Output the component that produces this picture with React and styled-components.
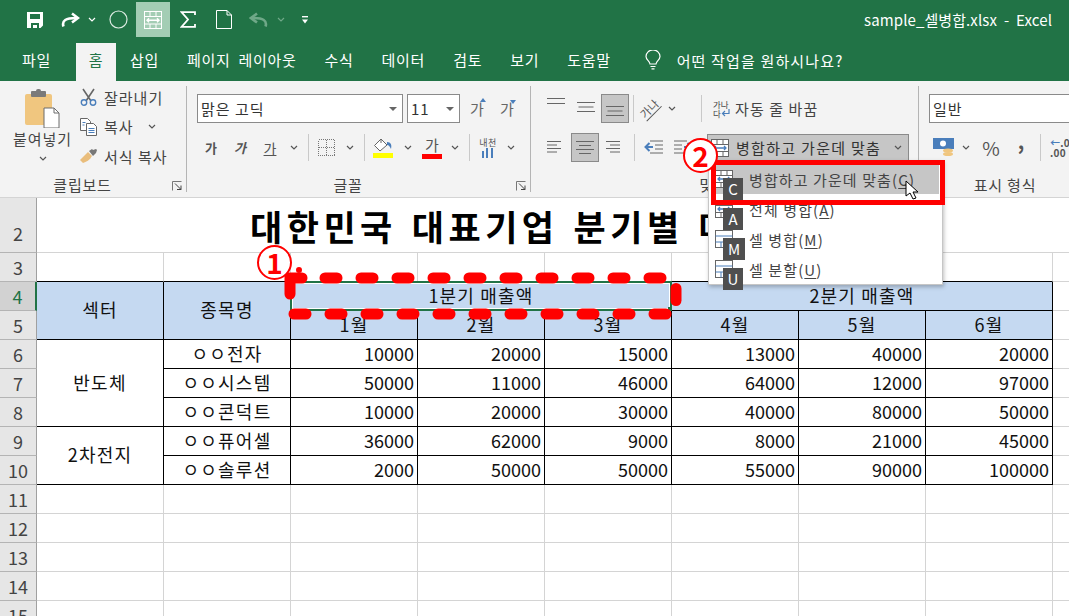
import styled, { createGlobalStyle } from 'styled-components'

const FONT = `"Noto Sans CJK KR", "Noto Sans", sans-serif`
const GREEN = '#217346'
const BLUE = '#4a7ebb'
const INK = '#444'

const GlobalStyle = createGlobalStyle`
    html, body {
        margin: 0;
        height: 100%;
        overflow: hidden;
        background: #fff;
        font-family: ${FONT};
    }
    * { box-sizing: border-box; }
`

const Page = styled.div`
    position: relative;
    width: 1069px;
    height: 616px;
    overflow: hidden;
`

/* title bar */
const TitleBar = styled.div`
    height: 43px;
    background: ${GREEN};
    display: flex;
    align-items: flex-start;
    padding-left: 27px;
    color: #fff;
`
const Qat = styled.div`
    width: ${(p) => p.$w}px;
    height: 35px;
    margin-top: 2px;
    padding-left: ${(p) => p.$pad || 0}px;
    display: flex;
    align-items: center;
    justify-content: center;
    background: ${(p) => (p.$active ? '#a3cdb4' : 'transparent')};
`
const DocTitle = styled.div`
    margin-left: auto;
    margin-right: 17px;
    margin-top: 10px;
    font-size: 15px;
    line-height: 20px;
    letter-spacing: 0.1px;
    white-space: pre;
`

/* tabs */
const TabBar = styled.div`
    height: 38px;
    background: ${GREEN};
    display: flex;
    padding-left: 8px;
    color: #fff;
`
const Tab = styled.div`
    padding: 0 14px;
    font-size: 15px;
    letter-spacing: 0.7px;
    word-spacing: 4px;
    line-height: 34px;
    white-space: nowrap;
    ${(p) => p.$gap && `margin-right: ${p.$gap}px;`}
    ${(p) => p.$active && `
        background: #f3f3f3;
        color: ${GREEN};
        width: 40px;
        padding: 0;
        text-align: center;
    `}
`
const Tell = styled.div`
    display: flex;
    align-items: center;
    margin-left: 20px;
    height: 34px;
    gap: 16px;
    font-size: 15px;
    letter-spacing: 1.15px;
`

/* ribbon */
const Ribbon = styled.div`
    height: 117px;
    background: #f3f3f3;
    border-bottom: 1px solid #d4d4d4;
    display: flex;
    color: ${INK};
`
const Group = styled.div`
    position: relative;
    flex: none;
    width: ${(p) => p.$w}px;
    height: 106px;
    margin-top: 5px;
    border-right: ${(p) => (p.$last ? 'none' : '1px solid #b4b4b4')};
    display: flex;
    flex-direction: column;
`
const GroupBody = styled.div`
    flex: 1;
    min-height: 0;
`
const GroupLabel = styled.div`
    height: 20px;
    margin-bottom: -3px;
    text-align: center;
    font-size: 15px;
    letter-spacing: 0.8px;
    line-height: 20px;
    padding-right: ${(p) => (p.$plain ? 0 : 21)}px;
`
const Launcher = styled.svg`
    position: absolute;
    right: 3px;
    bottom: 1px;
    width: 11px;
    height: 10px;
`
const Row = styled.div`
    display: flex;
    align-items: center;
    height: ${(p) => p.$h || 29}px;
    margin-top: ${(p) => p.$top || 0}px;
    padding-left: ${(p) => p.$left || 0}px;
    gap: ${(p) => p.$gap || 0}px;
`
const Slot = styled.div`
    flex: none;
    width: ${(p) => p.$w}px;
    height: ${(p) => p.$h || 29}px;
    display: flex;
    align-items: center;
    justify-content: center;
    ${(p) => p.$on && 'background: #c6c6c6; border: 1px solid #8a8a8a;'}
`
const Sep = styled.div`
    flex: none;
    width: 1px;
    height: 27px;
    background: #c9c9c9;
    margin-left: ${(p) => p.$m}px;
`
const Combo = styled.div`
    flex: none;
    width: ${(p) => p.$w}px;
    height: 29px;
    background: #fff;
    border: 1px solid #8a8a8a;
    display: flex;
    align-items: center;
    justify-content: space-between;
    padding: 0 5px 0 3px;
    font-size: 15px;
    letter-spacing: 1px;
    color: #333;
`
const ComboArrow = styled.span`
    width: 0;
    height: 0;
    border-left: 4px solid transparent;
    border-right: 4px solid transparent;
    border-top: 4px solid #666;
`

/* clipboard */
const ClipBody = styled(GroupBody)`
    display: flex;
`
const PasteButton = styled.div`
    width: 78px;
    padding: 3px 0 0 7px;
    display: flex;
    flex-direction: column;
    align-items: center;
    font-size: 15px;
    letter-spacing: 0.9px;
`
const PasteLabel = styled.div`
    line-height: 20px;
    margin-top: 1px;
    margin-bottom: 7px;
    white-space: nowrap;
`
const SmallStack = styled.div`
    display: flex;
    flex-direction: column;
    gap: 7.5px;
`
const SmallButton = styled.div`
    height: 22px;
    display: flex;
    align-items: center;
    font-size: 15px;
    letter-spacing: 1px;
    white-space: nowrap;
`
const SmallIcon = styled.div`
    width: 26px;
    padding-left: 2px;
    display: flex;
`

/* font */
const Ga = styled.span`
    font-size: ${(p) => p.$size || 14}px;
    font-weight: ${(p) => (p.$bold ? 700 : 400)};
    font-style: ${(p) => (p.$italic ? 'italic' : 'normal')};
    text-decoration: ${(p) => (p.$under ? 'underline' : 'none')};
    color: ${(p) => p.$color || '#555'};
    line-height: 18px;
`
const Grow = styled.div`
    position: relative;
    width: 26px;
    display: flex;
    justify-content: center;
    font-size: 15px;
    color: #666;
`
const GrowMark = styled.span`
    position: absolute;
    top: ${(p) => (p.$down ? 0 : -2)}px;
    right: 4px;
    width: 0;
    height: 0;
    border-left: 3px solid transparent;
    border-right: 3px solid transparent;
    ${(p) => (p.$down ? `border-top: 4px solid ${BLUE};` : `border-bottom: 4px solid ${BLUE};`)}
`
const Swatch = styled.div`
    display: flex;
    flex-direction: column;
    align-items: center;
    width: 20px;
`
const SwatchBar = styled.div`
    width: 20px;
    height: 5px;
    background: ${(p) => p.$c};
`
const Phonetic = styled.div`
    display: flex;
    flex-direction: column;
    align-items: center;
    font-size: 9px;
    line-height: 11px;
    letter-spacing: 0.4px;
    color: #555;
`

/* alignment */
const Orient = styled.div`
    position: relative;
    font-size: 11px;
    line-height: 13px;
    transform: rotate(-45deg);
    color: #555;
    letter-spacing: 0.5px;
    white-space: nowrap;
    border-bottom: 1px solid #555;
`
const WrapButton = styled.div`
    display: flex;
    align-items: center;
    padding-left: 11px;
    gap: 4px;
    font-size: 15px;
    letter-spacing: 1.1px;
    white-space: nowrap;
`
const WrapGlyph = styled.div`
    width: 18px;
    display: flex;
    flex-direction: column;
    font-size: 8.5px;
    line-height: 8.5px;
    letter-spacing: 0;
    color: #444;
`
const WrapLine = styled.div`
    display: flex;
    align-items: center;
    white-space: nowrap;
`
const MergeButton = styled.div`
    flex: none;
    width: 202px;
    height: 28px;
    margin-left: 12px;
    background: #c6c6c6;
    border: 1px solid #8a8a8a;
    display: flex;
    align-items: center;
    padding: 0 6px 0 3px;
    gap: 7px;
    font-size: 15px;
    letter-spacing: 1.3px;
    color: #333;
    white-space: nowrap;
`
const MergeChevron = styled.span`
    margin-left: auto;
    display: flex;
`

/* number */
const Symbol = styled.span`
    font-size: ${(p) => p.$size}px;
    color: #555;
    font-weight: ${(p) => p.$weight || 400};
    margin-top: ${(p) => p.$lift || 0}px;
`
const DecimalGlyph = styled.div`
    font-size: 10px;
    line-height: 10px;
    font-weight: 700;
    color: #555;
    letter-spacing: 0.3px;
    white-space: nowrap;
`
const DecimalArrow = styled.span`
    color: ${BLUE};
`

/* sheet */
const Sheet = styled.div`
    display: grid;
    grid-template-columns: 37px repeat(8, 127px) 17px;
    grid-template-rows: 55px repeat(13, 29px);
    font-size: 18px;
    letter-spacing: 1.2px;
    color: #111;
`
const RowHead = styled.div`
    background: ${(p) => (p.$sel ? '#d2d2d2' : '#e6e6e6')};
    color: ${(p) => (p.$sel ? GREEN : '#444')};
    border-right: ${(p) => (p.$sel ? `2px solid ${GREEN}` : '1px solid #a0a0a0')};
    border-bottom: 1px solid #b4b4b4;
    display: flex;
    align-items: flex-end;
    justify-content: center;
    line-height: 27px;
    letter-spacing: 0;
    padding-bottom: ${(p) => p.$lift || 0}px;
`
const Cell = styled.div`
    position: relative;
    grid-column: span ${(p) => p.$span || 1};
    grid-row: span ${(p) => p.$rows || 1};
    background: ${(p) => (p.$head ? '#c5d9f1' : '#fff')};
    border-right: ${(p) => (p.$noRight ? 'none' : `1px solid ${p.$rightDark ? '#000' : '#d4d4d4'}`)};
    border-bottom: 1px solid ${(p) => (p.$bottomDark ? '#000' : '#d4d4d4')};
    display: flex;
    align-items: center;
    justify-content: ${(p) => (p.$num ? 'flex-end' : 'center')};
    padding-right: ${(p) => (p.$num ? 3 : 0)}px;
    padding-bottom: 2px;
    line-height: 27px;
    white-space: nowrap;
    ${(p) => p.$num && 'letter-spacing: 0;'}
`
const Title = styled(Cell)`
    font-size: 35px;
    font-weight: 700;
    letter-spacing: 4.5px;
    word-spacing: 2.5px;
    color: #000;
    justify-content: flex-start;
    padding-left: 213px;
    padding-bottom: 0;
    overflow: hidden;
`
const Selection = styled.div`
    position: absolute;
    left: -1px;
    top: -1px;
    right: -1px;
    bottom: -1px;
    border: 2px solid ${GREEN};
    box-shadow: inset 0 0 0 1px #fff;
    &::after {
        content: '';
        position: absolute;
        right: -3px;
        bottom: -3px;
        width: 5px;
        height: 5px;
        background: ${GREEN};
    }
`

/* annotations on top of the sheet */
const Dashes = styled.svg`
    position: absolute;
    left: 0;
    top: 0;
    pointer-events: none;
`
const Badge = styled.div`
    position: absolute;
    left: ${(p) => p.$x - 17}px;
    top: ${(p) => p.$y - 17}px;
    width: 35px;
    height: 35px;
    border-radius: 50%;
    background: #fff;
    border: 2px solid #f00;
    color: #f00;
    font-size: 28px;
    font-weight: 700;
    line-height: 30px;
    text-align: center;
`
const Menu = styled.div`
    position: absolute;
    left: 708px;
    top: 160px;
    width: 235px;
    height: 125px;
    background: #fff;
    border: 1px solid #c6c6c6;
    box-shadow: 1px 2px 4px rgba(0, 0, 0, 0.25);
    padding-top: 3px;
`
const MenuItem = styled.div`
    height: 30px;
    display: flex;
    align-items: center;
    margin: 0 3px;
    padding-left: 3px;
    gap: 16px;
    font-size: 15px;
    letter-spacing: 1.1px;
    color: #444;
    background: ${(p) => (p.$on ? '#c6c6c6' : 'transparent')};
    white-space: nowrap;
    & u { text-underline-offset: 2px; }
`
const KeyTip = styled.div`
    position: absolute;
    left: 723px;
    top: ${(p) => p.$top}px;
    width: ${(p) => p.$w || 20}px;
    height: 22px;
    background: #4f4f4f;
    color: #fff;
    font-size: 15px;
    line-height: 22px;
    text-align: center;
`
const RedBox = styled.div`
    position: absolute;
    left: 711px;
    top: 160px;
    width: 234px;
    height: 45px;
    border: 5px solid #f00;
    pointer-events: none;
`
const Cursor = styled.svg`
    position: absolute;
    left: 905px;
    top: 180px;
`

/* icons */
const Chevron = ({ c = '#555' }) => (
    <svg width="8" height="5" viewBox="0 0 8 5" fill="none" stroke={c} strokeWidth="1.2">
        <path d="M1 1l3 3 3-3" />
    </svg>
)

const Save = () => (
    <svg width="16" height="16" viewBox="0 0 16 16">
        <path fill="#fff" fillRule="evenodd" d="M0 0h16v13.500L13.500 16H0zM3 2v5h10V2zM4 11v5h2v-3h4v3h2v-5z" />
    </svg>
)
const Curl = ({ c = '#fff', flip }) => (
    <svg width="19" height="15" viewBox="0 0 19 15" fill="none" stroke={c} strokeWidth="2.6" style={flip ? { transform: 'scaleX(-1)' } : undefined}>
        <path d="M2.500 14.500C0.500 8.500 5 6 15 6" />
        <path d="M11 1.500L17 6l-6 4.500" />
    </svg>
)
const Ring = () => (
    <svg width="19" height="19" viewBox="0 0 19 19" fill="none" stroke="#dcebe2" strokeWidth="1.2">
        <circle cx="9.500" cy="9.500" r="8.500" />
    </svg>
)
const QatMerge = () => (
    <svg width="20" height="20" viewBox="0 0 20 20" fill="none" stroke="#fff" strokeWidth="1">
        <rect x="1.500" y="1.500" width="17" height="17" />
        <path d="M1.500 6.500h17M1.500 14h17M7 1.500v5M13 1.500v5M7 14v4.500M13 14v4.500" />
        <path d="M4 10.200h12M6 8.200l-2 2 2 2M14 8.200l2 2-2 2" strokeWidth="1.400" />
    </svg>
)
const Sigma = () => (
    <svg width="16" height="17" viewBox="0 0 16 17" fill="none" stroke="#fff" strokeWidth="1.800">
        <path d="M15 4V1.200H1.500L8 8.500 1.500 15.800H15V13" />
    </svg>
)
const Page2 = () => (
    <svg width="16" height="19" viewBox="0 0 16 19" fill="none" stroke="#fff" strokeWidth="1">
        <path d="M1 .5h10l4.500 4.500v13.500H.5V.5zM11 .5V5h4.500" />
    </svg>
)
const QatMore = () => (
    <svg width="7" height="8" viewBox="0 0 7 8" fill="#fff">
        <rect y="0" width="6" height="1.400" />
        <path d="M0 3.500h6L3 7.500z" />
    </svg>
)
const Bulb = () => (
    <svg width="16" height="20" viewBox="0 0 16 20" fill="none" stroke="#fff" strokeWidth="1.200">
        <path d="M5 14c0-3-4-4-4-7.500a7 6.500 0 0 1 14 0C15 10 11 11 11 14z" />
        <path d="M5.500 16.500h5M6.500 18.800h3" />
    </svg>
)
const PasteIcon = () => (
    <svg width="35" height="39" viewBox="0 0 35 39">
        <rect x="0" y="5" width="27" height="31" rx="2" fill="#f0c67f" />
        <rect x="6" y="2" width="15" height="6" rx="1" fill="#7a7a7a" />
        <rect x="11" y="0" width="5" height="4" rx="2" fill="#7a7a7a" />
        <path d="M19 19h10l5 5v15H19z" fill="#fff" stroke="#6d6d6d" />
        <path d="M29 19v5h5" fill="none" stroke="#6d6d6d" />
    </svg>
)
const Scissors = () => (
    <svg width="17" height="18" viewBox="0 0 17 18" fill="none">
        <path d="M3 1l8 12M14 1L6 13" stroke="#666" strokeWidth="1.600" />
        <circle cx="4" cy="14.500" r="2.700" stroke={BLUE} strokeWidth="1.400" />
        <circle cx="13" cy="14.500" r="2.700" stroke={BLUE} strokeWidth="1.400" />
    </svg>
)
const CopyIcon = () => (
    <svg width="17" height="18" viewBox="0 0 17 18" fill="#fff" stroke="#666">
        <path d="M.5.500h7l3 3v9H.5z" />
        <path d="M6.500 5.500h7l3 3v9h-10z" />
        <path d="M8.500 10.500h6M8.500 12.500h6M8.500 14.500h6M2.500 4.500h3M2.500 7h2" stroke={BLUE} />
    </svg>
)
const Brush = () => (
    <svg width="18" height="16" viewBox="0 0 18 16">
        <path d="M0 12l8-8 4 4c-2 4-6 6-9 7z" fill="#e9bd7c" />
        <path d="M9 3l3-2 1 1 3-1 1 1-1 3-2 2-1 1z" fill="#777" />
    </svg>
)
const Launch = () => (
    <Launcher viewBox="0 0 11 10" fill="none" stroke="#777">
        <path d="M.5 9.500V.5h9" />
        <path d="M3 2.500l6 6M5 8.500h4v-4" stroke="#444" />
    </Launcher>
)
const BorderIcon = () => (
    <svg width="17" height="17" viewBox="0 0 17 17" fill="none" stroke="#777" strokeDasharray="1 1" shapeRendering="crispEdges">
        <rect x=".5" y=".5" width="16" height="16" />
        <path d="M8.500.5v16M.5 8.500h16" />
    </svg>
)
const FillIcon = () => (
    <svg width="20" height="15" viewBox="0 0 20 15" fill="none">
        <path d="M8 1L1.500 7.500 7 13l7-6z" stroke="#666" fill="#fff" />
        <path d="M8 1V5" stroke="#666" />
        <path d="M14 4c4 0 5 3 4 7-1-2-2-4-4-4z" fill={BLUE} />
    </svg>
)
const PhoneticBars = () => (
    <svg width="14" height="10" viewBox="0 0 14 10" fill={BLUE}>
        <rect x="1" y="3" width="2" height="7" />
        <rect x="5" y="0" width="2" height="10" />
        <rect x="10" y="0" width="2" height="10" />
    </svg>
)
const ReturnArrow = () => (
    <svg width="9" height="8" viewBox="0 0 9 8" fill="none" stroke={BLUE} strokeWidth="1.200">
        <path d="M8 0v4.500H1.500M4 2L1.500 4.500 4 7" />
    </svg>
)

const LINES = {
    top: [[0, 0, 18], [0, 5, 18]],
    middle: [[0, 0, 18], [1.500, 4.500, 15], [0, 9, 18]],
    bottom: [[0, 0, 18], [1.500, 4.500, 15], [0, 9, 18]],
    left: [[0, 0, 14], [0, 3.500, 10], [0, 7, 14], [0, 10.500, 10]],
    center: [[0, 0, 18], [3, 4, 12], [0, 8, 18], [3, 12, 12]],
    right: [[0, 0, 14], [4, 3.500, 10], [0, 7, 14], [4, 10.500, 10]],
}
const AlignIcon = ({ kind, down = 0 }) => (
    <svg width="18" height="14" viewBox="0 0 18 14" stroke="#666" style={{ marginTop: down }}>
        {LINES[kind].map(([x, y, w]) => (
            <line key={y} x1={x} x2={x + w} y1={y + 0.5} y2={y + 0.5} />
        ))}
    </svg>
)
const IndentIcon = ({ flip }) => (
    <svg width="19" height="16" viewBox="0 0 19 16" fill="none" style={flip ? { transform: 'scaleX(-1)' } : undefined}>
        <path d="M6 1h13M11 5h8M11 9h8M6 13h13" stroke="#666" />
        <path d="M9 7H2M5.500 3L1.500 7l4 4" stroke={BLUE} strokeWidth="2" />
    </svg>
)
const MergeGlyph = ({ kind = 'center' }) => (
    <svg width="18" height="18" viewBox="0 0 18 18" fill="#fff" stroke="#666">
        <rect x=".5" y=".5" width="17" height="17" />
        {kind !== 'split' && <path d="M.5 5.500h17M6 .5v5M12 .5v5M.5 12.500h17M6 12.500v5M12 12.500v5" fill="none" />}
        {kind === 'split' && <path d="M.5 6h17M.5 12h17M6 12v5.500M12 12v5.500" fill="none" stroke={BLUE} />}
        {kind !== 'split' && <path d="M3 9h12M5 7L3 9l2 2M13 7l2 2-2 2" fill="none" stroke={BLUE} strokeWidth="1.300" />}
    </svg>
)
const MoneyIcon = () => (
    <svg width="21" height="19" viewBox="0 0 21 19">
        <rect x="0" y="0" width="21" height="11" fill={BLUE} />
        <circle cx="10" cy="5.500" r="3" fill="#fff" />
        <ellipse cx="15" cy="12.500" rx="5" ry="2" fill="#f0c67f" />
        <ellipse cx="15" cy="16" rx="5" ry="2" fill="#f0c67f" />
    </svg>
)

const ROWS = [
    ['반도체', 3, 'ㅇㅇ전자', [10000, 20000, 15000, 13000, 40000, 20000]],
    [null, 0, 'ㅇㅇ시스템', [50000, 11000, 46000, 64000, 12000, 97000]],
    [null, 0, 'ㅇㅇ콘덕트', [10000, 20000, 30000, 40000, 80000, 50000]],
    ['2차전지', 2, 'ㅇㅇ퓨어셀', [36000, 62000, 9000, 8000, 21000, 45000]],
    [null, 0, 'ㅇㅇ솔루션', [2000, 50000, 50000, 55000, 90000, 100000]],
]
const MONTHS = ['1월', '2월', '3월', '4월', '5월', '6월']
const TOP_DASHES = Array.from({ length: 10 }, (_, i) => 325 + i * 36)
const BOTTOM_DASHES = Array.from({ length: 11 }, (_, i) => 294 + i * 36)

const Line = ({ no, sector, span, name, values }) => (
    <>
        <RowHead>{no}</RowHead>
        {sector && <Cell $rows={span} $rightDark $bottomDark>{sector}</Cell>}
        <Cell $rightDark $bottomDark>{name}</Cell>
        {values.map((v, i) => <Cell key={i} $num $rightDark $bottomDark>{v}</Cell>)}
        <Cell $noRight />
    </>
)

const BlankLine = ({ no }) => (
    <>
        <RowHead>{no}</RowHead>
        {Array.from({ length: 8 }, (_, i) => <Cell key={i} />)}
        <Cell $noRight />
    </>
)

const App = () => {
    return (
        <Page>
            <GlobalStyle />
            <TitleBar>
                <Qat $w={16}><Save /></Qat>
                <Qat $w={44} $pad={10}><Curl /></Qat>
                <Qat $w={10}><Chevron c="#fff" /></Qat>
                <Qat $w={39} $pad={3}><Ring /></Qat>
                <Qat $w={34} $active><QatMerge /></Qat>
                <Qat $w={36}><Sigma /></Qat>
                <Qat $w={36}><Page2 /></Qat>
                <Qat $w={32}><Curl c="#6fa888" flip /></Qat>
                <Qat $w={13}><Chevron c="#6fa888" /></Qat>
                <Qat $w={36}><QatMore /></Qat>
                <DocTitle>sample_셀병합.xlsx  -  Excel</DocTitle>
            </TitleBar>
            <TabBar>
                <Tab $gap={11}>파일</Tab>
                <Tab $active>홈</Tab>
                <Tab>삽입</Tab>
                <Tab>페이지 레이아웃</Tab>
                <Tab>수식</Tab>
                <Tab>데이터</Tab>
                <Tab>검토</Tab>
                <Tab>보기</Tab>
                <Tab>도움말</Tab>
                <Tell><Bulb />어떤 작업을 원하시나요?</Tell>
            </TabBar>
            <Ribbon>
                <Group $w={187}>
                    <ClipBody>
                        <PasteButton>
                            <PasteIcon />
                            <PasteLabel>붙여넣기</PasteLabel>
                            <Chevron />
                        </PasteButton>
                        <SmallStack>
                            <SmallButton><SmallIcon><Scissors /></SmallIcon>잘라내기</SmallButton>
                            <SmallButton>
                                <SmallIcon><CopyIcon /></SmallIcon>복사
                                <Slot $w={36} $h={22}><Chevron /></Slot>
                            </SmallButton>
                            <SmallButton><SmallIcon><Brush /></SmallIcon>서식 복사</SmallButton>
                        </SmallStack>
                    </ClipBody>
                    <GroupLabel>클립보드</GroupLabel>
                    <Launch />
                </Group>
                <Group $w={344}>
                    <GroupBody>
                        <Row $top={8} $left={10} $gap={4}>
                            <Combo $w={206}>맑은 고딕<ComboArrow /></Combo>
                            <Combo $w={53}>11<ComboArrow /></Combo>
                            <Grow><Ga $size={15} $color="#666">가</Ga><GrowMark /></Grow>
                            <Grow><Ga $size={15} $color="#666">가</Ga><GrowMark $down /></Grow>
                        </Row>
                        <Row $top={10} $left={10}>
                            <Slot $w={28}><Ga $bold $size={13}>가</Ga></Slot>
                            <Slot $w={30}><Ga $bold $italic $size={13}>가</Ga></Slot>
                            <Slot $w={30}><Ga $under>가</Ga></Slot>
                            <Slot $w={18}><Chevron /></Slot>
                            <Sep $m={5} />
                            <Slot $w={34}><BorderIcon /></Slot>
                            <Slot $w={14}><Chevron /></Slot>
                            <Sep $m={7} />
                            <Slot $w={36}><Swatch><FillIcon /><SwatchBar $c="#ff0" /></Swatch></Slot>
                            <Slot $w={13}><Chevron /></Slot>
                            <Slot $w={36}><Swatch><Ga $size={15}>가</Ga><SwatchBar $c="#f00" /></Swatch></Slot>
                            <Slot $w={10}><Chevron /></Slot>
                            <Sep $m={9} />
                            <Slot $w={36}><Phonetic>내천<PhoneticBars /></Phonetic></Slot>
                            <Slot $w={10}><Chevron /></Slot>
                        </Row>
                    </GroupBody>
                    <GroupLabel>글꼴</GroupLabel>
                    <Launch />
                </Group>
                <Group $w={388}>
                    <GroupBody>
                        <Row $top={8} $left={10} $gap={0}>
                            <Slot $w={30}><AlignIcon kind="top" down={-8} /></Slot>
                            <Slot $w={30}><AlignIcon kind="middle" /></Slot>
                            <Slot $w={28} $on><AlignIcon kind="bottom" down={8} /></Slot>
                            <Sep $m={4} />
                            <Slot $w={32}><Orient>가나</Orient></Slot>
                            <Slot $w={12}><Chevron /></Slot>
                            <Sep $m={23} />
                            <WrapButton>
                                <WrapGlyph>
                                    <WrapLine>가나</WrapLine>
                                    <WrapLine>다<ReturnArrow /></WrapLine>
                                </WrapGlyph>
                                자동 줄 바꿈
                            </WrapButton>
                        </Row>
                        <Row $top={10} $left={10}>
                            <Slot $w={30}><AlignIcon kind="left" /></Slot>
                            <Slot $w={28} $on><AlignIcon kind="center" /></Slot>
                            <Slot $w={32}><AlignIcon kind="right" /></Slot>
                            <Sep $m={3} />
                            <Slot $w={36}><IndentIcon /></Slot>
                            <Slot $w={24}><IndentIcon flip /></Slot>
                            <MergeButton>
                                <MergeGlyph />
                                병합하고 가운데 맞춤
                                <MergeChevron><Chevron /></MergeChevron>
                            </MergeButton>
                        </Row>
                    </GroupBody>
                    <GroupLabel>맞춤</GroupLabel>
                    <Launch />
                </Group>
                <Group $w={172} $last>
                    <GroupBody>
                        <Row $top={8} $left={10}>
                            <Combo $w={162}>일반</Combo>
                        </Row>
                        <Row $top={10} $left={10}>
                            <Slot $w={28}><MoneyIcon /></Slot>
                            <Slot $w={18}><Chevron /></Slot>
                            <Slot $w={32}><Symbol $size={19}>%</Symbol></Slot>
                            <Slot $w={28}><Symbol $size={20} $weight={700} $lift={-14}>,</Symbol></Slot>
                            <Sep $m={5} />
                            <Slot $w={38}><DecimalGlyph><DecimalArrow>←</DecimalArrow>.0<br />.00</DecimalGlyph></Slot>
                        </Row>
                    </GroupBody>
                    <GroupLabel $plain>표시 형식</GroupLabel>
                </Group>
            </Ribbon>
            <Sheet>
                <RowHead $lift={5}>2</RowHead>
                <Title $span={8} $noRight>대한민국 대표기업 분기별 매출액</Title>
                <Cell $noRight />

                <RowHead>3</RowHead>
                {Array.from({ length: 8 }, (_, i) => <Cell key={i} $bottomDark />)}
                <Cell $noRight />

                <RowHead $sel>4</RowHead>
                <Cell $rows={2} $head $rightDark $bottomDark>섹터</Cell>
                <Cell $rows={2} $head $rightDark $bottomDark>종목명</Cell>
                <Cell $span={3} $head $rightDark $bottomDark>1분기 매출액<Selection /></Cell>
                <Cell $span={3} $head $rightDark $bottomDark>2분기 매출액</Cell>
                <Cell $noRight />

                <RowHead>5</RowHead>
                {MONTHS.map((m) => <Cell key={m} $head $rightDark $bottomDark>{m}</Cell>)}
                <Cell $noRight />

                {ROWS.map(([sector, span, name, values], r) => (
                    <Line key={name} no={r + 6} sector={sector} span={span} name={name} values={values} />
                ))}

                {[11, 12, 13, 14, 15].map((no) => (
                    <BlankLine key={no} no={no} />
                ))}
            </Sheet>

            <Menu>
                <MenuItem $on><MergeGlyph /><span>병합하고 가운데 맞춤(<u>C</u>)</span></MenuItem>
                <MenuItem><MergeGlyph kind="across" /><span>전체 병합(<u>A</u>)</span></MenuItem>
                <MenuItem><MergeGlyph kind="split" /><span>셀 병합(<u>M</u>)</span></MenuItem>
                <MenuItem><MergeGlyph kind="split" /><span>셀 분할(<u>U</u>)</span></MenuItem>
            </Menu>
            <KeyTip $top={178}>C</KeyTip>
            <KeyTip $top={208}>A</KeyTip>
            <KeyTip $top={238} $w={22}>M</KeyTip>
            <KeyTip $top={268}>U</KeyTip>
            <RedBox />
            <Dashes width="1069" height="616" fill="none" stroke="#f00" strokeWidth="11" strokeLinecap="round">
                <path d="M290 294V278H302" />
                {TOP_DASHES.map((x) => <line key={x} x1={x} x2={x + 12} y1="278" y2="278" />)}
                {BOTTOM_DASHES.map((x) => <line key={x} x1={x} x2={x + 12} y1="314" y2="314" />)}
                <line x1="676" x2="676" y1="288.500" y2="300.500" />
                <circle cx="299" cy="270" r="2" strokeWidth="2" fill="#f00" />
            </Dashes>
            <Badge $x={274} $y={262}>1</Badge>
            <Badge $x={700} $y={155}>2</Badge>
            <Cursor width="16" height="21" viewBox="0 0 16 21" fill="#fff" stroke="#000">
                <path d="M1 1v15l4-3 3 6 3-1-3-6h5z" />
            </Cursor>
        </Page>
    )
}

export default App
